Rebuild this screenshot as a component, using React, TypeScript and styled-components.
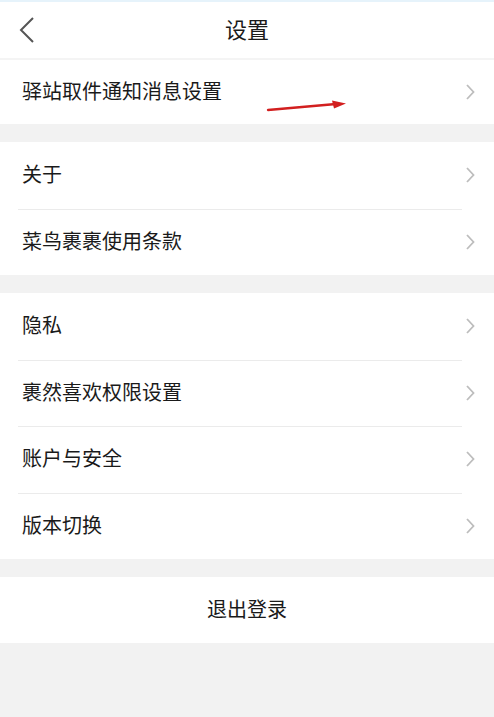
import styled, { createGlobalStyle } from "styled-components";

const GlobalStyle = createGlobalStyle`
  html, body {
    margin: 0;
    padding: 0;
    background: #f2f2f2;
  }
  body {
    font-family: "Noto Sans CJK SC", "Noto Sans", sans-serif;
    color: #1a1a1a;
  }
`;

interface Row {
  label: string;
  arrow?: boolean;
}

const sections: { height: number; rows: Row[] }[] = [
  { height: 64, rows: [{ label: "驿站取件通知消息设置", arrow: true }] },
  { height: 66.5, rows: [{ label: "关于" }, { label: "菜鸟裹裹使用条款" }] },
  {
    height: 66.5,
    rows: [{ label: "隐私" }, { label: "裹然喜欢权限设置" }, { label: "账户与安全" }, { label: "版本切换" }],
  },
];

function Chevron() {
  return (
    <ChevronIcon width="12" height="18" viewBox="0 0 12 18">
      <path d="M3 2 L9.5 9 L3 16" fill="none" stroke="#bdbdbd" strokeWidth="1.8" />
    </ChevronIcon>
  );
}

function RedArrow() {
  return (
    <ArrowMark width="84" height="14" viewBox="0 0 84 14">
      <path d="M2 11 L70 5" stroke="#d21f1f" strokeWidth="2.4" strokeLinecap="round" />
      <path d="M66 1.5 L80 4.5 L68 9.5 Z" fill="#d21f1f" />
    </ArrowMark>
  );
}

export default function App() {
  return (
    <Page>
      <GlobalStyle />
      <TopStrip />
      <Header>
        <BackButton>
          <svg width="16" height="28" viewBox="0 0 16 28">
            <path d="M14 2 L2 14 L14 26" fill="none" stroke="#555" strokeWidth="2" />
          </svg>
        </BackButton>
        <Title>设置</Title>
      </Header>
      {sections.map((section, i) => (
        <Section key={i}>
          {section.rows.map((row, j) => (
            <ListRow key={row.label} $height={section.height} $divider={j > 0}>
              <Label>{row.label}</Label>
              {row.arrow && <RedArrow />}
              <Chevron />
            </ListRow>
          ))}
        </Section>
      ))}
      <Section>
        <Logout>退出登录</Logout>
      </Section>
    </Page>
  );
}

const Page = styled.div`
  width: 494px;
  min-height: 717px;
  background: #f2f2f2;
  display: flex;
  flex-direction: column;
`;

const TopStrip = styled.div`
  height: 2px;
  background: #e6f3fb;
`;

const Header = styled.header`
  height: 56px;
  background: #fff;
  display: flex;
  align-items: center;
  justify-content: center;
  position: relative;
  border-bottom: 2px solid #f4f4f4;
`;

const BackButton = styled.div`
  position: absolute;
  left: 19px;
  top: 14px;
  display: flex;
`;

const Title = styled.h1`
  margin: -4px 0 0;
  font-size: 22px;
  line-height: 1;
  font-weight: 400;
  color: #1a1a1a;
`;

const Section = styled.div`
  background: #fff;
  margin-bottom: 18px;
`;

const ListRow = styled.div<{ $height: number; $divider: boolean }>`
  height: ${(p) => p.$height}px;
  display: flex;
  align-items: center;
  padding: 0 18px 0 22px;
  position: relative;

  ${(p) =>
    p.$divider &&
    `
    &::before {
      content: "";
      position: absolute;
      top: 0;
      left: 18px;
      right: 32px;
      height: 1px;
      background: #ebebeb;
    }
  `}
`;

const Label = styled.span`
  flex: 1;
  font-size: 20px;
  line-height: 1;
  margin-top: -2px;
  color: #1a1a1a;
`;

const ChevronIcon = styled.svg`
  flex-shrink: 0;
`;

const ArrowMark = styled.svg`
  position: absolute;
  left: 266px;
  top: 39px;
`;

const Logout = styled.div`
  height: 66px;
  display: flex;
  align-items: center;
  justify-content: center;
  font-size: 20px;
  line-height: 1;
  padding-bottom: 2px;
  box-sizing: border-box;
  color: #1a1a1a;
`;
